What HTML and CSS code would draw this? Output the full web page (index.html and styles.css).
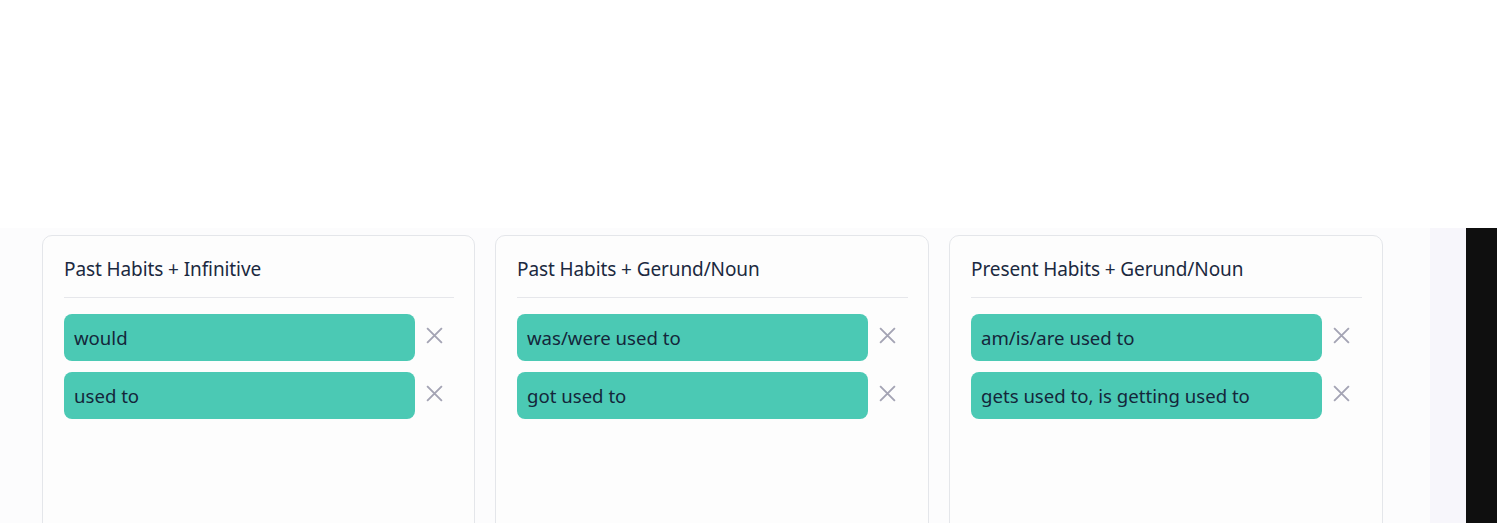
FILE: index.html
```html
<!DOCTYPE html>
<html lang="en">
<head>
  <meta charset="UTF-8">
  <title>Habits</title>
  <link rel="stylesheet" href="styles.css">
</head>
<body>

  <div class="header"></div>

  <div class="workspace">
    <div class="board">
      <div class="card">
        <h3 class="card-title">Past Habits + Infinitive</h3>
        <div class="chip-row">
          <div class="chip">would</div>
          <button class="remove" aria-label="Remove">
            <svg viewBox="0 0 18 18"><path d="M2 2 L16 16 M16 2 L2 16"/></svg>
          </button>
        </div>
        <div class="chip-row">
          <div class="chip">used to</div>
          <button class="remove" aria-label="Remove">
            <svg viewBox="0 0 18 18"><path d="M2 2 L16 16 M16 2 L2 16"/></svg>
          </button>
        </div>
      </div>

      <div class="card">
        <h3 class="card-title">Past Habits + Gerund/Noun</h3>
        <div class="chip-row">
          <div class="chip">was/were used to</div>
          <button class="remove" aria-label="Remove">
            <svg viewBox="0 0 18 18"><path d="M2 2 L16 16 M16 2 L2 16"/></svg>
          </button>
        </div>
        <div class="chip-row">
          <div class="chip">got used to</div>
          <button class="remove" aria-label="Remove">
            <svg viewBox="0 0 18 18"><path d="M2 2 L16 16 M16 2 L2 16"/></svg>
          </button>
        </div>
      </div>

      <div class="card">
        <h3 class="card-title">Present Habits + Gerund/Noun</h3>
        <div class="chip-row">
          <div class="chip">am/is/are used to</div>
          <button class="remove" aria-label="Remove">
            <svg viewBox="0 0 18 18"><path d="M2 2 L16 16 M16 2 L2 16"/></svg>
          </button>
        </div>
        <div class="chip-row">
          <div class="chip">gets used to, is getting used to</div>
          <button class="remove" aria-label="Remove">
            <svg viewBox="0 0 18 18"><path d="M2 2 L16 16 M16 2 L2 16"/></svg>
          </button>
        </div>
      </div>
    </div>
    <div class="track"></div>
    <div class="edge"></div>
  </div>

</body>
</html>
```

FILE: styles.css
```css
body {
  font-family: 'Noto Sans', 'Open Sans', sans-serif;
  background-color: #ffffff;
  margin: 0;
  height: 523px;
  overflow: hidden;
  color: #1b2940;
}

.header {
  height: 228px;
  background-color: #ffffff;
}

.workspace {
  display: flex;
  height: 295px;
}

.board {
  flex: 1;
  background-color: #fcfcfd;
  padding: 7px 0 0 42px;
  display: grid;
  grid-template-columns: 433px 434px 434px;
  column-gap: 20px;
  align-items: start;
}

.track {
  width: 36px;
  background-color: #f7f6fb;
}

.edge {
  width: 31px;
  background-color: #0f0f0f;
}

.card {
  background-color: #fdfdfd;
  border: 1px solid #e4e6ea;
  border-radius: 10px;
  padding: 0 20px 0 21px;
  height: 320px;
  box-sizing: border-box;
}

.card-title {
  margin: 0 0 16px;
  padding: 21px 0 16px;
  font-size: 19px;
  font-weight: 400;
  line-height: 24px;
  letter-spacing: -0.1px;
  border-bottom: 1px solid #e6e7eb;
}

.chip-row {
  display: flex;
  align-items: center;
  margin-bottom: 11px;
}

.chip {
  width: 351px;
  height: 47px;
  box-sizing: border-box;
  padding: 0 10px;
  display: flex;
  align-items: center;
  background-color: #4bc9b4;
  border-radius: 8px;
  font-size: 18.6px;
  color: #14263a;
}

.remove {
  background: none;
  border: none;
  padding: 0;
  margin-left: 10px;
  width: 19px;
  height: 19px;
  cursor: pointer;
  margin-top: -4px;
}

.remove svg {
  width: 19px;
  height: 19px;
  display: block;
}

.remove path {
  stroke: #a4a4b4;
  stroke-width: 1.8;
  fill: none;
}
```
